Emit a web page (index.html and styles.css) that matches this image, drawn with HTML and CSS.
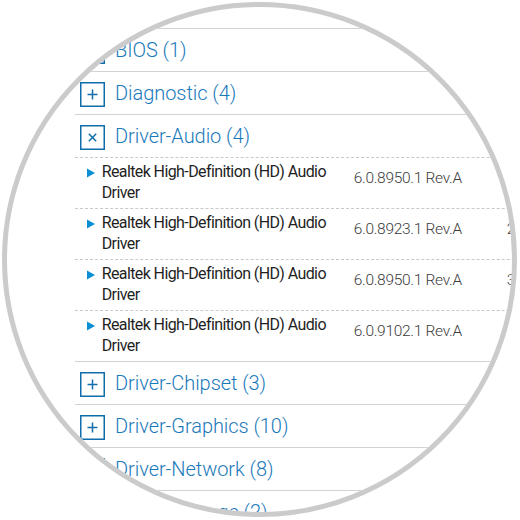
FILE: index.html
```html
<!DOCTYPE html>
<html>
<head>
<meta charset="utf-8">
<link rel="stylesheet" href="styles.css">
</head>
<body>
<div class="lens">
  <div class="list">
    <div class="cat">
      <svg class="ico" width="25" height="25" viewBox="0 0 25 25"><rect x="0.75" y="0.75" width="23.5" height="23.5"/><path d="M7.5 12.5h10M12.5 7.5v10"/></svg>
      <span class="label">BIOS (1)</span>
    </div>
    <div class="cat">
      <svg class="ico" width="25" height="25" viewBox="0 0 25 25"><rect x="0.75" y="0.75" width="23.5" height="23.5"/><path d="M7.5 12.5h10M12.5 7.5v10"/></svg>
      <span class="label">Diagnostic (4)</span>
    </div>
    <div class="group">
      <div class="cat open">
        <svg class="ico" width="25" height="25" viewBox="0 0 25 25"><rect x="0.75" y="0.75" width="23.5" height="23.5"/><path d="M8.8 8.8l7.4 7.4M16.2 8.8l-7.4 7.4"/></svg>
        <span class="label">Driver-Audio (4)</span>
      </div>
      <div class="sub">
        <svg class="tri" width="8" height="10" viewBox="0 0 8 10"><polygon points="0,0.5 8,5 0,9.5"/></svg>
        <div class="name">Realtek High-Definition (HD) Audio Driver</div>
        <div class="ver">6.0.8950.1 Rev.A</div>
        <div class="size">18.3 MB</div>
      </div>
      <div class="sub">
        <svg class="tri" width="8" height="10" viewBox="0 0 8 10"><polygon points="0,0.5 8,5 0,9.5"/></svg>
        <div class="name">Realtek High-Definition (HD) Audio Driver</div>
        <div class="ver">6.0.8923.1 Rev.A</div>
        <div class="size">29.1 MB</div>
      </div>
      <div class="sub">
        <svg class="tri" width="8" height="10" viewBox="0 0 8 10"><polygon points="0,0.5 8,5 0,9.5"/></svg>
        <div class="name">Realtek High-Definition (HD) Audio Driver</div>
        <div class="ver">6.0.8950.1 Rev.A</div>
        <div class="size">31.4 MB</div>
      </div>
      <div class="sub last">
        <svg class="tri" width="8" height="10" viewBox="0 0 8 10"><polygon points="0,0.5 8,5 0,9.5"/></svg>
        <div class="name">Realtek High-Definition (HD) Audio Driver</div>
        <div class="ver">6.0.9102.1 Rev.A</div>
        <div class="size">40.2 MB</div>
      </div>
    </div>
    <div class="cat">
      <svg class="ico" width="25" height="25" viewBox="0 0 25 25"><rect x="0.75" y="0.75" width="23.5" height="23.5"/><path d="M7.5 12.5h10M12.5 7.5v10"/></svg>
      <span class="label">Driver-Chipset (3)</span>
    </div>
    <div class="cat">
      <svg class="ico" width="25" height="25" viewBox="0 0 25 25"><rect x="0.75" y="0.75" width="23.5" height="23.5"/><path d="M7.5 12.5h10M12.5 7.5v10"/></svg>
      <span class="label">Driver-Graphics (10)</span>
    </div>
    <div class="cat">
      <svg class="ico" width="25" height="25" viewBox="0 0 25 25"><rect x="0.75" y="0.75" width="23.5" height="23.5"/><path d="M7.5 12.5h10M12.5 7.5v10"/></svg>
      <span class="label">Driver-Network (8)</span>
    </div>
    <div class="cat">
      <svg class="ico" width="25" height="25" viewBox="0 0 25 25"><rect x="0.75" y="0.75" width="23.5" height="23.5"/><path d="M7.5 12.5h10M12.5 7.5v10"/></svg>
      <span class="label">Driver-Storage (2)</span>
    </div>
  </div>
</div>
</body>
</html>
```
FILE: styles.css
```css
html, body {
  margin: 0;
  padding: 0;
  background: #ffffff;
}
body {
  width: 520px;
  height: 520px;
  overflow: hidden;
  font-family: Roboto, "Liberation Sans", sans-serif;
}
.lens {
  margin: 2px 0 0 2px;
  width: 515px;
  height: 515px;
  box-sizing: border-box;
  border: 5px solid #cbcbcb;
  border-radius: 50%;
  overflow: hidden;
  background: #ffffff;
}
.list {
  margin: 21px 0 0 68px;
  width: 520px;
  border-top: 1px solid #d2d2d2;
}
.cat {
  display: flex;
  align-items: center;
  height: 42px;
  border-bottom: 1px solid #d2d2d2;
  padding-left: 5px;
}
.cat.open {
  border-bottom: 1px dashed #c9c9c9;
}
.ico {
  flex: none;
  margin-top: 3px;
  margin-right: 10px;
}
.ico rect {
  fill: none;
  stroke: #0f6dab;
  stroke-width: 1.5;
}
.ico path {
  fill: none;
  stroke: #0f6dab;
  stroke-width: 1.5;
}
.label {
  font-size: 20px;
  font-weight: 300;
  letter-spacing: -0.05px;
  color: #1a79ba;
  line-height: 24px;
}
.group {
  border-bottom: 1px solid #d2d2d2;
}
.sub {
  display: flex;
  align-items: flex-start;
  height: 50px;
  padding-left: 12px;
  border-bottom: 1px dashed #c9c9c9;
}
.sub.last {
  border-bottom: none;
}
.tri {
  flex: none;
  margin-top: 10px;
  margin-right: 6.7px;
}
.tri polygon {
  fill: #0a8fd2;
}
.name {
  width: 240px;
  padding-top: 4px;
  font-size: 16px;
  line-height: 20.5px;
  letter-spacing: -0.6px;
  color: #1f1f1f;
}
.ver {
  width: 153px;
  margin-left: 12px;
  padding-top: 9.5px;
  font-size: 15.5px;
  font-weight: 300;
  line-height: 20px;
  letter-spacing: -0.3px;
  color: #3c3c3c;
}
.size {
  padding-top: 9.5px;
  font-size: 15.5px;
  font-weight: 300;
  line-height: 20px;
  color: #3c3c3c;
}
```
